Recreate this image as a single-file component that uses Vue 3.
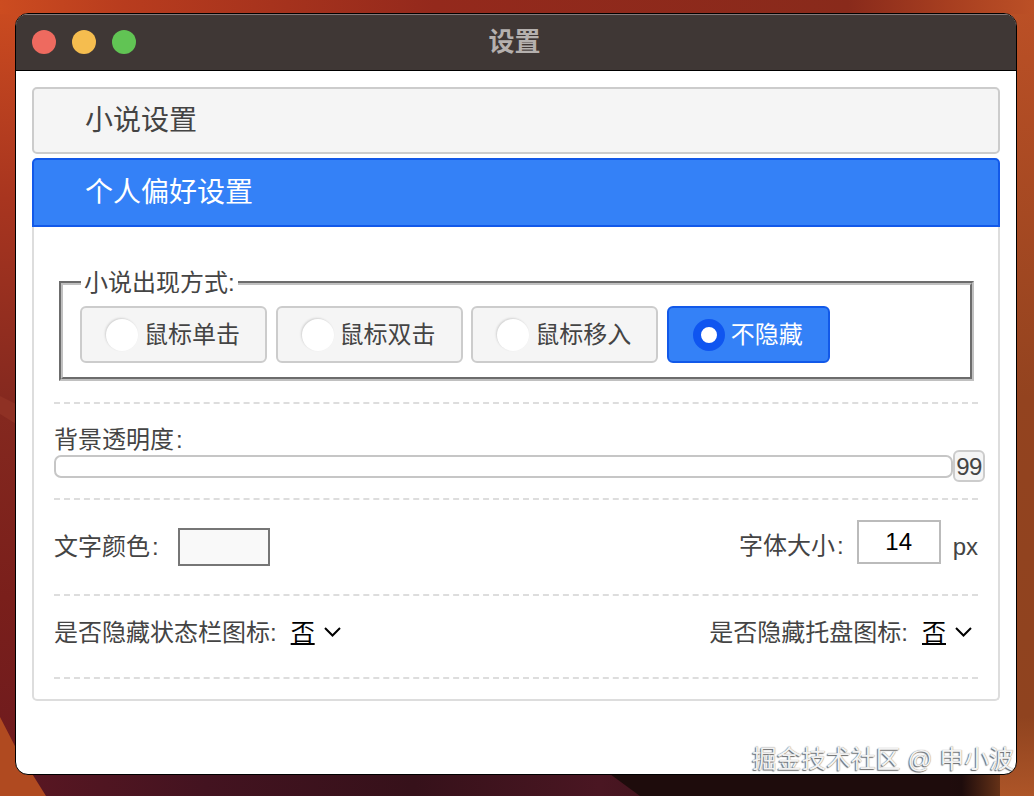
<script setup>
const modes = [
  { label: '鼠标单击', active: false },
  { label: '鼠标双击', active: false },
  { label: '鼠标移入', active: false },
  { label: '不隐藏', active: true }
]
</script>

<template>
  <div class="desktop">
    <svg class="wallpaper" width="1034" height="796" viewBox="0 0 1034 796" aria-hidden="true">
      <defs>
        <linearGradient id="top" x1="0" x2="1" y1="0" y2="0">
          <stop offset="0" stop-color="#cc4c20" />
          <stop offset="0.12" stop-color="#b83c1e" />
          <stop offset="0.42" stop-color="#94291c" />
          <stop offset="0.82" stop-color="#892a1b" />
          <stop offset="0.92" stop-color="#a83f20" />
          <stop offset="1" stop-color="#bc5026" />
        </linearGradient>
        <linearGradient id="left" x1="0" x2="0" y1="0" y2="1">
          <stop offset="0" stop-color="#cc4c20" />
          <stop offset="0.25" stop-color="#a8351f" />
          <stop offset="0.5" stop-color="#85291f" />
          <stop offset="0.75" stop-color="#7a1f1b" />
          <stop offset="1" stop-color="#6c1a1f" />
        </linearGradient>
        <linearGradient id="right" x1="0" x2="0" y1="0" y2="1">
          <stop offset="0" stop-color="#bc5026" />
          <stop offset="0.5" stop-color="#93431f" />
          <stop offset="0.9" stop-color="#8f431f" />
          <stop offset="1" stop-color="#ad5528" />
        </linearGradient>
        <linearGradient id="bottom" x1="0" x2="1" y1="0" y2="0">
          <stop offset="0" stop-color="#5c1722" />
          <stop offset="0.2" stop-color="#431320" />
          <stop offset="0.4" stop-color="#36111a" />
          <stop offset="0.58" stop-color="#4a1622" />
          <stop offset="0.93" stop-color="#1e0c0c" />
          <stop offset="0.97" stop-color="#6a3418" />
          <stop offset="1" stop-color="#ad5528" />
        </linearGradient>
      </defs>
      <rect width="1034" height="796" fill="url(#left)" />
      <rect y="774" width="1034" height="22" fill="url(#bottom)" />
      <rect x="1000" width="34" height="796" fill="url(#right)" />
      <rect width="1034" height="14" fill="url(#top)" />
      <polygon points="610,774 950,774 950,796 640,796" fill="#1e0c0c" />
      <polygon points="0,396 16,404 16,424 0,414" fill="#9a3a2a" opacity="0.5" />
      <polygon points="0,717 16,748 46,796 0,796" fill="#b04a20" />
    </svg>

    <div class="window">
      <header class="titlebar">
        <div class="lights">
          <span class="light red"></span>
          <span class="light yellow"></span>
          <span class="light green"></span>
        </div>
        <span class="title">设置</span>
      </header>

      <main class="body">
        <div class="acc-head">小说设置</div>
        <div class="acc-head open">个人偏好设置</div>

        <section class="acc-content">
          <fieldset class="modes">
            <legend>小说出现方式:</legend>
            <div class="mode-row">
              <label v-for="m in modes" :key="m.label" class="mode" :class="{ active: m.active }">
                <span class="radio"></span>
                <span>{{ m.label }}</span>
              </label>
            </div>
          </fieldset>
          <div class="rule first"></div>

          <div class="opacity">
            <div class="opacity-label">背景透明度<span class="colon">:</span></div>
            <div class="slider-row">
              <div class="track"></div>
              <div class="thumb">99</div>
            </div>
          </div>
          <div class="rule"></div>

          <div class="row color-row">
            <div class="group color-group">
              <span class="label">文字颜色<span class="colon">:</span></span>
              <span class="swatch"></span>
            </div>
            <div class="group size-group">
              <span class="label size-label">字体大小<span class="colon">:</span></span>
              <input class="size-input" type="text" value="14" />
              <span class="unit">px</span>
            </div>
          </div>
          <div class="rule"></div>

          <div class="row select-row">
            <div class="group">
              <span class="label">是否隐藏状态栏图标:</span>
              <span class="select">否</span>
              <svg class="chevron" width="17" height="10" viewBox="0 0 17 10"><path d="M1 1l7.5 7.5L16 1" /></svg>
            </div>
            <div class="group select-right">
              <span class="label">是否隐藏托盘图标:</span>
              <span class="select">否</span>
              <svg class="chevron" width="17" height="10" viewBox="0 0 17 10"><path d="M1 1l7.5 7.5L16 1" /></svg>
            </div>
          </div>
          <div class="rule"></div>
        </section>
      </main>
    </div>

    <div class="watermark">掘金技术社区 @ 申小波</div>
  </div>
</template>

<style>
html, body { margin: 0; background: #3a1218; }
</style>

<style scoped>
.desktop {
  position: relative;
  width: 1034px;
  height: 796px;
  box-sizing: border-box;
  padding: 13px 17px 21px 15px;
  display: flex;
  overflow: hidden;
  font-family: "Liberation Sans", "Noto Sans CJK SC", sans-serif;
  color: #444;
  font-size: 24px;
}
.wallpaper { position: absolute; left: 0; top: 0; }
.window {
  position: relative;
  flex: 1;
  display: flex;
  flex-direction: column;
  border: 1px solid #000;
  border-radius: 13px;
  overflow: hidden;
  background: #fff;
}
.titlebar {
  height: 56px;
  flex: none;
  box-sizing: content-box;
  border-bottom: 1px solid #000;
  background: #3f3735;
  box-shadow: inset 0 1px 0 #85797a;
  display: flex;
  align-items: center;
  justify-content: center;
  position: relative;
}
.lights {
  position: absolute;
  left: 16px;
  top: 16px;
  display: flex;
  gap: 16px;
}
.light { width: 24px; height: 24px; border-radius: 50%; }
.red { background: #ee6a5f; }
.yellow { background: #f5bd4f; }
.green { background: #61c454; }
.title {
  color: #b5b0ae;
  font-size: 26px;
  font-weight: 700;
  line-height: 30px;
  margin-right: 3px;
}
.body { padding: 16px 16px 0; }
.acc-head {
  height: 67px;
  box-sizing: border-box;
  border: 2px solid #ccc;
  border-radius: 5px;
  background: #f5f5f5;
  padding-left: 51px;
  font-size: 28px;
  line-height: 64px;
  color: #444;
}
.acc-head.open {
  height: 69px;
  margin-top: 4px;
  background: #3481f7;
  border-color: #1259e9;
  border-radius: 5px 5px 0 0;
  color: #fff;
  line-height: 65px;
}
.acc-content {
  border: 2px solid #ddd;
  border-top: 0;
  border-radius: 0 0 5px 5px;
  padding: 41px 20px 20px;
  height: 474px;
  box-sizing: border-box;
}
.modes {
  margin: 0 4px 0 5px;
  padding: 8px 17px 14px;
  border: 4px groove #c0c0c0;
  min-width: 0;
}
.modes legend {
  padding: 0 3px;
  margin-left: 1px;
  line-height: 30px;
  color: #444;
}
.mode-row { display: flex; gap: 8.6px; }
.mode {
  height: 57px;
  box-sizing: border-box;
  border: 2px solid #ccc;
  border-radius: 6px;
  background: #f5f5f5;
  padding: 0 25px 0 24px;
  display: flex;
  align-items: center;
  gap: 6px;
  line-height: 30px;
  color: #444;
}
.mode.active {
  background: #3481f7;
  border-color: #1259e9;
  color: #fff;
}
.radio {
  width: 32px;
  height: 32px;
  box-sizing: border-box;
  border-radius: 50%;
  background: #fff;
  box-shadow: -1px -1px 2px #d4d4d4;
}
.mode.active .radio {
  border: 8px solid #0f55f0;
  box-shadow: none;
}
.rule { border-top: 2px dashed #ddd; }
.rule.first { margin-top: 21px; }
.opacity { padding: 23px 0 16px; }
.opacity-label { line-height: 26px; }
.colon { margin-left: 2px; }
.slider-row {
  display: flex;
  align-items: center;
  margin-top: -3px;
  margin-right: -7px;
}
.track {
  flex: 1;
  height: 23px;
  box-sizing: border-box;
  border: 2px solid #c6c6c6;
  border-radius: 7px;
  background: #fff;
}
.thumb {
  width: 32px;
  height: 32px;
  box-sizing: border-box;
  border: 2px solid #ccc;
  border-radius: 6px;
  background: #f5f5f5;
  text-align: center;
  line-height: 30px;
  letter-spacing: -0.5px;
  color: #444;
}
.row { display: flex; justify-content: space-between; align-items: flex-start; }
.group { display: flex; align-items: center; }
.color-row { padding: 20px 0 28px; }
.color-group { margin-top: 8px; gap: 19px; }
.label { line-height: 36px; white-space: nowrap; }
.swatch {
  width: 92px;
  height: 38px;
  box-sizing: border-box;
  border: 2px solid #767676;
  background: #f9f9f9;
}
.size-group { align-items: flex-start; }
.size-label { margin-top: 8px; margin-right: 13px; }
.size-input {
  width: 84px;
  height: 44px;
  box-sizing: border-box;
  border: 2px solid #bbb;
  background: #fff;
  font: 24px "Liberation Sans", sans-serif;
  color: #000;
  text-align: center;
  padding: 0 0 1px;
  outline: none;
}
.unit { margin: 12px 0 0 12px; line-height: 30px; }
.select-row { padding: 19px 0 26px; }
.select {
  margin-left: 14px;
  color: #000;
  line-height: 36px;
  text-decoration: underline;
  text-decoration-thickness: 2px;
  text-underline-offset: 2px;
}
.chevron { margin: 0 0 2px 9px; }
.chevron path { fill: none; stroke: #000; stroke-width: 2; }
.select-right { margin-right: 6px; }
.watermark {
  position: absolute;
  right: 20px;
  top: 743px;
  font-size: 24.8px;
  line-height: 34px;
  white-space: nowrap;
  color: #f2f2f2;
  text-shadow: -1px 1px 1px #6a6a6a, 0 0 1px #777;
}
</style>
